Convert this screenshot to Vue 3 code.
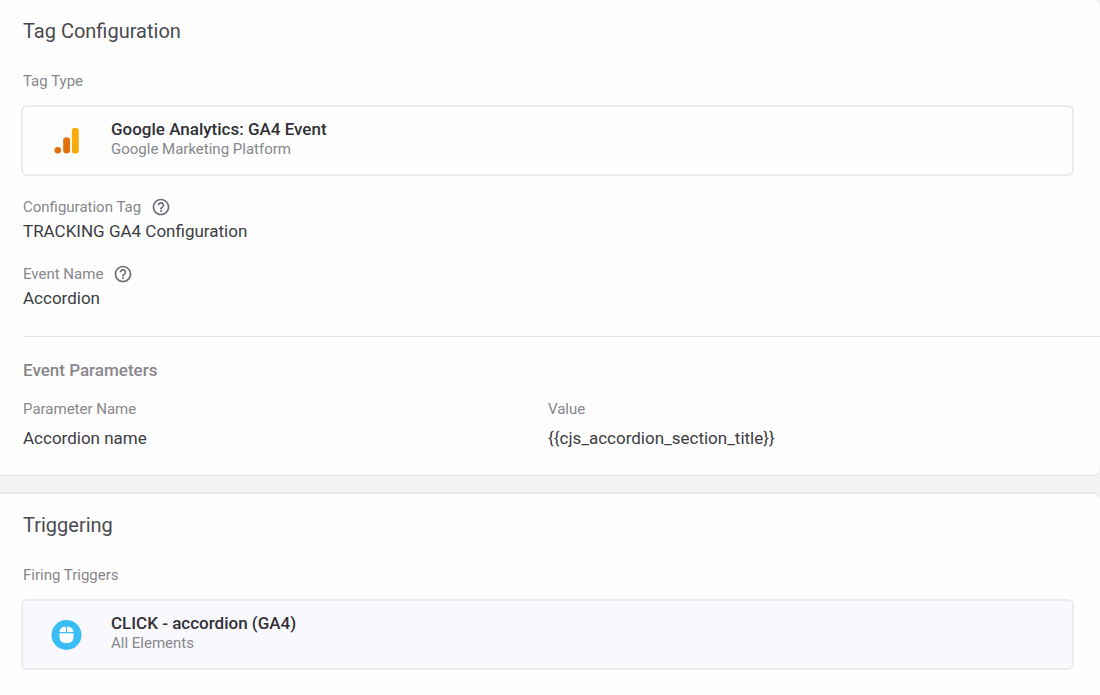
<script setup>
const fields = [
  { label: 'Configuration Tag', value: 'TRACKING GA4 Configuration' },
  { label: 'Event Name', value: 'Accordion' },
]
const parameters = [{ name: 'Accordion name', value: '{{cjs_accordion_section_title}}' }]
</script>

<template>
  <main class="page">
    <section class="panel">
      <h2 class="title">Tag Configuration</h2>
      <p class="label">Tag Type</p>
      <button type="button" class="card">
        <svg class="card-icon" viewBox="0 0 32 32" aria-hidden="true">
          <circle cx="6.800" cy="25.300" r="3.300" fill="#e0700c" />
          <rect x="12.200" y="12.200" width="6.800" height="16.400" rx="3.300" fill="#e0700c" />
          <rect x="20.800" y="2.800" width="7" height="25.800" rx="3.200" fill="#f9ab0c" />
        </svg>
        <span class="card-text">
          <span class="card-name">Google Analytics: GA4 Event</span>
          <span class="card-kind">Google Marketing Platform</span>
        </span>
      </button>

      <dl class="fields">
        <div v-for="field in fields" :key="field.label" class="field">
          <dt class="field-label">
            {{ field.label }}
            <button type="button" class="help" :aria-label="`Help: ${field.label}`">
              <svg viewBox="0 0 24 24" aria-hidden="true">
                <path
                  fill="currentColor"
                  d="M11 18h2v-2h-2v2zm1-16C6.480 2 2 6.480 2 12s4.480 10 10 10 10-4.480 10-10S17.520 2 12 2zm0 18c-4.410 0-8-3.590-8-8s3.590-8 8-8 8 3.590 8 8-3.590 8-8 8zm0-14c-2.210 0-4 1.790-4 4h2c0-1.100.9-2 2-2s2 .9 2 2c0 2-3 1.750-3 5h2c0-2.250 3-2.500 3-5 0-2.210-1.790-4-4-4z"
                />
              </svg>
            </button>
          </dt>
          <dd class="value">{{ field.value }}</dd>
        </div>
      </dl>

      <div class="parameters">
        <h3 class="subtitle" id="parameters-title">Event Parameters</h3>
        <table class="table" aria-labelledby="parameters-title">
          <thead>
            <tr>
              <th scope="col">Parameter Name</th>
              <th scope="col">Value</th>
            </tr>
          </thead>
          <tbody>
            <tr v-for="row in parameters" :key="row.name">
              <td>{{ row.name }}</td>
              <td>{{ row.value }}</td>
            </tr>
          </tbody>
        </table>
      </div>
    </section>

    <section class="panel">
      <h2 class="title">Triggering</h2>
      <p class="label">Firing Triggers</p>
      <button type="button" class="card tinted">
        <svg class="card-icon" viewBox="0 0 32 32" aria-hidden="true">
          <circle cx="15.500" cy="16" r="15" fill="#39bdf5" />
          <path fill="#fff" d="M15 7.800v5.200H8.500c0-3.200 2.600-5.200 6.500-5.200zM16 7.800c3.900 0 6.500 2 6.500 5.200H16zM8.500 14.200h14v4c0 3.600-2.600 5.800-7 5.800s-7-2.200-7-5.800z" />
        </svg>
        <span class="card-text">
          <span class="card-name">CLICK - accordion (GA4)</span>
          <span class="card-kind">All Elements</span>
        </span>
      </button>
    </section>
  </main>
</template>

<style>
body {
  background: #fefefe;
}
</style>

<style scoped>
.page {
  display: flex;
  flex-direction: column;
  gap: 16px;
  min-height: 100vh;
  background: #f3f2f5;
  font-family: Roboto, "Liberation Sans", sans-serif;
  color: #3c3c42;
}
.panel {
  padding: 19px 0 24px 23px;
  background: #fefefe;
  border-bottom: 1px solid #e0dfe2;
  border-radius: 0 8px 8px 0;
}
.panel + .panel {
  flex: 1;
  padding-bottom: 20px;
  border-top: 2px solid #e8e7ea;
  border-bottom: 0;
  border-bottom-right-radius: 0;
}
.title {
  margin: 0 0 28px;
  font-size: 20px;
  line-height: 24px;
  font-weight: 400;
  color: #4a4a50;
}
.label {
  margin: 0 0 14px;
  font-size: 15px;
  line-height: 20px;
  color: #87878c;
}
.card {
  display: flex;
  align-items: center;
  gap: 28px;
  width: calc(100% - 24px);
  min-height: 71px;
  margin: 0 0 0 -2px;
  padding: 0 28px;
  border: 2px solid #ebeaed;
  border-radius: 6px;
  background: #fefefe;
  font-family: inherit;
  text-align: left;
  cursor: pointer;
}
.tinted {
  background: #f9f8fd;
}
.card-icon {
  flex: none;
  width: 32px;
  height: 32px;
}
.card-text {
  display: flex;
  flex-direction: column;
  padding-bottom: 4px;
}
.card-name {
  font-size: 17px;
  line-height: 20px;
  font-weight: 500;
  color: #303036;
}
.card-kind {
  font-size: 15px;
  line-height: 20px;
  color: #87878c;
}
.fields {
  display: flex;
  flex-direction: column;
  gap: 23px;
  margin: 21px 0 28px;
}
.field-label {
  display: flex;
  align-items: center;
  gap: 10px;
  height: 20px;
  font-size: 15px;
  line-height: 20px;
  color: #87878c;
}
.help {
  display: flex;
  padding: 0;
  border: 0;
  background: none;
  color: #6c6c74;
  cursor: pointer;
}
.help svg {
  width: 20px;
  height: 20px;
}
.value {
  margin: 4px 0 0;
  font-size: 17px;
  line-height: 20px;
}
.parameters {
  padding-top: 23px;
  border-top: 1px solid #e8e7ea;
}
.subtitle {
  margin: 0 0 19px;
  font-size: 17px;
  line-height: 20px;
  font-weight: 500;
  color: #87878c;
}
.table {
  width: 100%;
  table-layout: fixed;
  border-collapse: collapse;
  text-align: left;
}
.table th {
  width: 525px;
  padding: 0 0 9px;
  font-size: 15px;
  line-height: 20px;
  font-weight: 400;
  color: #87878c;
}
.table th:last-child {
  width: auto;
}
.table td {
  padding: 0 0 3px;
  font-size: 17px;
  line-height: 20px;
}
</style>
